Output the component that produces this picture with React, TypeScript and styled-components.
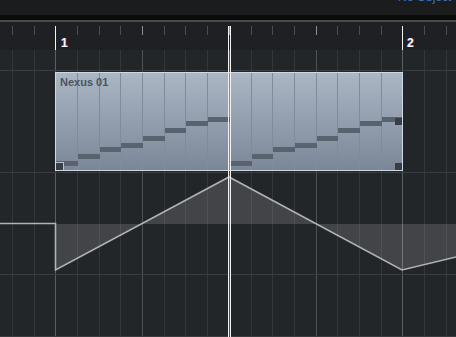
import styled, { createGlobalStyle } from 'styled-components'

const GlobalStyle = createGlobalStyle`
  html, body {
    margin: 0;
    padding: 0;
    background: #232629;
  }
  body {
    width: 456px;
    height: 337px;
    overflow: hidden;
    font-family: 'Liberation Sans', Arial, sans-serif;
  }
`

// grid columns in page pixels (16th notes, bar 1 at 55, bar 2 at 402)
const BAR_1 = 55
const BAR_2 = 402
const GRID = [12, 34, 55, 77, 99, 120, 142, 164, 185, 207, 229, 251, 272, 294, 316, 337, 359, 381, 402, 424, 446]
const BEATS = [142, 229, 316]

type Kind = 'bar' | 'beat' | 'sixteenth'
const kindOf = (x: number): Kind => (x === BAR_1 || x === BAR_2 ? 'bar' : BEATS.includes(x) ? 'beat' : 'sixteenth')

const laneLine: Record<Kind, string> = { bar: '#5c5f62', beat: '#4f5255', sixteenth: '#33363a' }

const gridBackground = GRID.map((x) => {
  const c = laneLine[kindOf(x)]
  return `transparent ${x}px, ${c} ${x}px, ${c} ${x + 1}px, transparent ${x + 1}px`
}).join(', ')

// note preview of the event: two runs of eight rising steps
const STEPS = [161, 154, 147, 143, 136, 128, 121, 117]
const EVENT_X = 56
const EVENT_Y = 73
const EVENT_W = 346
const cols = [EVENT_X - 1, ...GRID.filter((x) => x > BAR_1 && x < BAR_2), BAR_2]

const Page = styled.div`
  position: relative;
  width: 456px;
  height: 337px;
  display: flex;
  flex-direction: column;
  overflow: hidden;
`

const InfoLine = styled.div`
  height: 15px;
  flex: none;
  background: #1b1c1e;
  padding-left: 398px;
  box-sizing: border-box;
  overflow: hidden;
`

const InfoText = styled.div`
  margin-top: -9px;
  font-size: 12px;
  line-height: 12px;
  color: #3b74b8;
  white-space: nowrap;
`

const Splitter = styled.div`
  height: 7px;
  flex: none;
  box-sizing: border-box;
  background: #0c0c0d;
  border-bottom: 2px solid #4a4a4c;
`

const Ruler = styled.div`
  position: relative;
  height: 28px;
  flex: none;
  background: #1e2023;
`

const Tick = styled.span<{ $kind: Kind }>`
  position: absolute;
  top: 4px;
  width: 1px;
  height: ${(p) => (p.$kind === 'bar' ? '24px' : '9px')};
  background: ${(p) => (p.$kind === 'bar' ? '#f4f4f4' : p.$kind === 'beat' ? '#8d8f92' : '#4b4d50')};
`

const BarNumber = styled.span`
  position: absolute;
  top: 15px;
  font-size: 12px;
  line-height: 12px;
  font-weight: bold;
  color: #f4f6fa;
  text-shadow: -0.6px 0 #3b5bd0, 0.6px 0 #c23a2c;
`

const TrackArea = styled.div`
  flex: 1;
  display: flex;
  flex-direction: column;
  background-color: #232629;
  background-image: linear-gradient(to right, ${gridBackground});
`

const Lane = styled.div<{ $height?: number }>`
  position: relative;
  flex: ${(p) => (p.$height ? 'none' : '1')};
  height: ${(p) => (p.$height ? `${p.$height}px` : 'auto')};
  border-bottom: 1px solid #3a3d40;
`

const Event = styled.div`
  position: relative;
  margin: 1px 0 0 ${BAR_1}px;
  width: 348px;
  height: 99px;
  box-sizing: border-box;
  border: 1px solid #cfd9e4;
  background: linear-gradient(to bottom, #aab6c4, #7b8797);
`

const Preview = styled.svg`
  position: absolute;
  left: 0;
  top: 0;
`

const EventName = styled.div`
  position: relative;
  padding: 3px 0 0 4px;
  font-size: 11px;
  line-height: 13px;
  font-weight: bold;
  color: #4b5461;
`

const Handle = styled.span<{ $side: 'left' | 'right'; $top?: number }>`
  position: absolute;
  width: 7px;
  height: 7px;
  background: #3a3e44;
  ${(p) => (p.$side === 'left' ? 'left: 0; border-top: 1px solid #b7c2cf; border-right: 1px solid #b7c2cf;' : 'right: 0;')}
  ${(p) => (p.$top !== undefined ? `top: ${p.$top}px;` : 'bottom: 0;')}
`

const Automation = styled.svg`
  position: absolute;
  left: 0;
  top: 0;
`

const Cursor = styled.div`
  position: absolute;
  top: 26px;
  bottom: 0;
  left: 228px;
  width: 1px;
  border-left: 1px solid #f2f2f2;
  border-right: 1px solid #f2f2f2;
  pointer-events: none;
`

function NotePreview() {
  const notes = cols.slice(0, -1).map((x, i) => ({
    x: x + 1 - EVENT_X,
    w: cols[i + 1] - x,
    y: STEPS[i % 8] - EVENT_Y,
  }))
  return (
    <Preview width={EVENT_W} height={97}>
      {cols.slice(1, -1).map((x) => (
        <line key={x} x1={x - EVENT_X + 0.5} x2={x - EVENT_X + 0.5} y1={0} y2={97} stroke='#7f8c9b' strokeWidth={1} />
      ))}
      {notes.map((n, i) => (
        <rect key={i} x={n.x} y={n.y} width={n.w} height={5} fill='#58636f' />
      ))}
    </Preview>
  )
}

function App() {
  // automation lane starts at page y 173
  const top = 173
  const y = (v: number) => v - top
  const line = `M0 ${y(223.5)} H55.5 V${y(270)} L229 ${y(177)} L402 ${y(270)} L456 ${y(257)}`
  const fill = `55.5,${y(224)} 55.5,${y(270)} 229,${y(177)} 402,${y(270)} 456,${y(257)} 456,${y(224)}`

  return (
    <>
      <GlobalStyle />
      <Page>
        <InfoLine>
          <InfoText>No Object Selected</InfoText>
        </InfoLine>
        <Splitter />
        <Ruler>
          {GRID.map((x) => (
            <Tick key={x} $kind={kindOf(x)} style={{ left: x }} />
          ))}
          <BarNumber style={{ left: BAR_1 + 6 }}>1</BarNumber>
          <BarNumber style={{ left: BAR_2 + 5 }}>2</BarNumber>
        </Ruler>
        <TrackArea>
          <Lane $height={20} />
          <Lane $height={101}>
            <Event>
              <NotePreview />
              <EventName>Nexus 01</EventName>
              <Handle $side='left' />
              <Handle $side='right' $top={45} />
              <Handle $side='right' />
            </Event>
          </Lane>
          <Lane $height={101}>
            <Automation width={456} height={101}>
              <polygon points={fill} fill='rgba(255,255,255,0.14)' />
              <path d={line} fill='none' stroke='#b0b2b5' strokeWidth={1.6} />
            </Automation>
          </Lane>
          <Lane />
        </TrackArea>
        <Cursor />
      </Page>
    </>
  )
}

export default App
